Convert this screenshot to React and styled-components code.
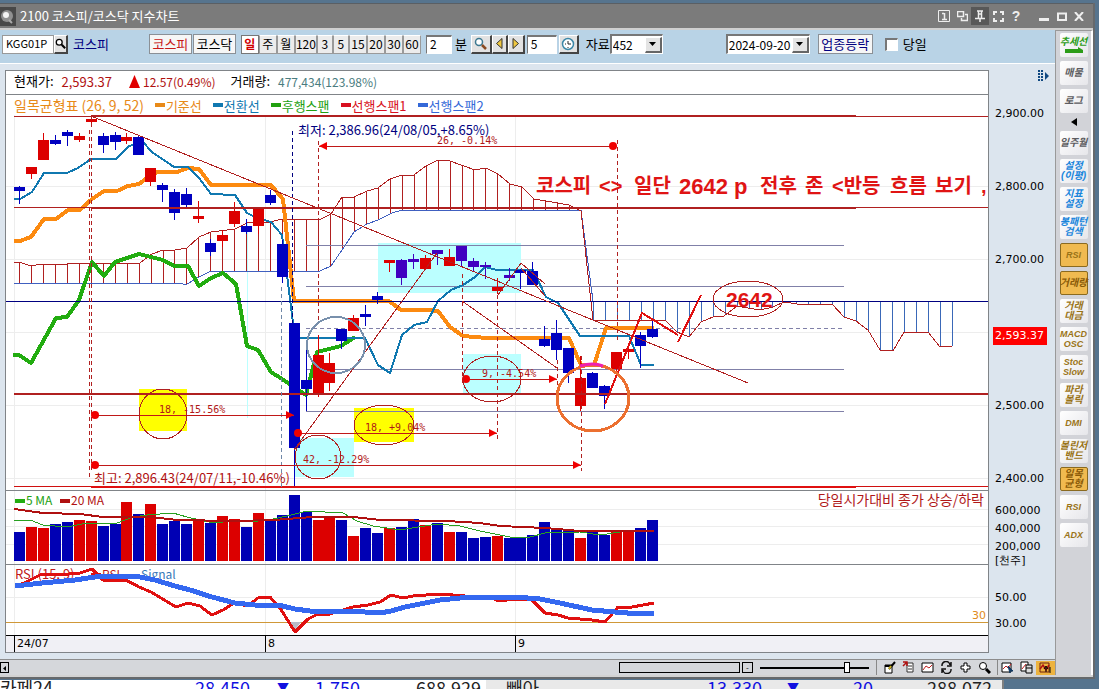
// App.jsx
import React from 'react';
import styled, { createGlobalStyle, css } from 'styled-components';

const GlobalStyle = createGlobalStyle`
  * {
    box-sizing: border-box;
  }

  body {
    margin: 0;
    background: #56748e;
    font-family: 'Noto Sans CJK KR', sans-serif;
    font-size: 12px;
    color: #000;
    overflow: hidden;
  }

  button,
  input,
  select {
    font-family: inherit;
    font-size: 12px;
    margin: 0;
    padding: 0;
    border-radius: 0;
  }
`;

/* ---------- window ---------- */

const Desktop = styled.div`
  height: 100vh;
  padding-top: 3px;
  overflow: hidden;
`;

const Window = styled.div`
  margin-right: 4px;
  border-right: 2px solid #66696c;
  border-bottom: 2px solid #66696c;
  background: #d2d2d2;
  padding-bottom: 2px;
`;

const TitleBar = styled.header`
  display: flex;
  align-items: center;
  height: 27px;
  padding-right: 6px;
  border-top: 1px solid #5a5f64;
  border-bottom: 2px solid #cfcfcf;
  background: #7b7b7b;
  color: #fff;
`;

const AppIcon = styled.svg`
  width: 16px;
  height: 19px;
  margin-right: 4px;
`;

const Title = styled.h1`
  flex: 1;
  margin: 0;
  font-size: 13px;
  font-weight: 400;
  line-height: 20px;
`;

const TitleButton = styled.button`
  display: flex;
  align-items: center;
  justify-content: center;
  width: ${(p) => p.$width || 18}px;
  height: 18px;
  border: 0;
  background: ${(p) => (p.$pressed ? '#585858' : 'transparent')};
  color: #eee;
  font-family: 'Liberation Sans', sans-serif;
  font-size: 14px;
  font-weight: 700;
`;

const TitleGap = styled.span`
  width: 10px;
`;

const WindowBody = styled.div`
  display: flex;
`;

const Main = styled.main`
  flex: 1;
  min-width: 0;
  background: #dce5ee;
`;

/* ---------- toolbar ---------- */

const Toolbar = styled.div`
  display: flex;
  align-items: center;
  height: 34px;
  padding: 0 0 5px 2px;
  border-bottom: 1px solid #fff;
  background: #b9d3e6;
  white-space: nowrap;
`;

const Group = styled.div`
  display: flex;
  align-items: center;
  gap: ${(p) => p.$gap || 0}px;
  margin-left: ${(p) => p.$left || 0}px;
`;

const TextBox = styled.input`
  width: ${(p) => p.$width}px;
  height: 19px;
  padding: 0 0 3px 3px;
  border: 1px solid #fff;
  border-top: 2px solid #777;
  border-left: 1px solid #777;
  background: #fff;
`;

const CodeBox = styled(TextBox)`
  font-size: 11px;
  border: 1px solid #999;
`;

const ToolButton = styled.button`
  display: flex;
  align-items: center;
  justify-content: center;
  width: ${(p) => p.$width}px;
  height: 19px;
  border: 1px solid #fff;
  border-right: 2px solid #444;
  border-bottom: 2px solid #444;
  background: #e2e2e2;
`;

const MarketButton = styled.button`
  width: ${(p) => p.$width || 43}px;
  height: 20px;
  border: 1px solid #8b9096;
  background: #f6f6f6;
  color: ${(p) => p.$color || '#000'};
  font-size: 13px;
  line-height: 16px;
`;

const PeriodButton = styled.button`
  width: ${(p) => p.$width}px;
  height: 19px;
  border: 1px solid #9a9a9a;
  border-top-color: #fff;
  background: #ececec;
  line-height: 16px;
  ${(p) =>
    p.$active &&
    css`
      border-color: #777;
      background: #fff;
      color: #d00000;
      font-weight: 700;
    `}
`;

const Label = styled.label`
  color: ${(p) => p.$color || '#000'};
  font-size: ${(p) => p.$size || 12}px;
  line-height: 18px;
`;

const Combo = styled.div`
  display: flex;
  align-items: center;
  width: ${(p) => p.$width}px;
  height: 20px;
  border: 1px solid #fff;
  border-top: 2px solid #777;
  border-left: 2px solid #777;
  background: #fff;
`;

const ComboSelect = styled.select`
  flex: 1;
  min-width: 0;
  height: 17px;
  padding: 0 0 3px 1px;
  border: 0;
  appearance: none;
  background: #fff;
`;

const ComboArrow = styled.span`
  display: flex;
  align-items: center;
  justify-content: center;
  width: 17px;
  height: 16px;
  border: 1px solid #fff;
  border-right: 2px solid #666;
  border-bottom: 2px solid #666;
  background: #e4e4e4;
  pointer-events: none;
`;

const CheckBox = styled.input`
  width: 13px;
  height: 13px;
  border: 1px solid #fff;
  border-top: 2px solid #777;
  border-left: 2px solid #777;
  appearance: none;
  background: #fff;
`;

/* ---------- chart ---------- */

const ChartArea = styled.div`
  display: flex;
  padding: 6px 0 6px 5px;
`;

const Frame = styled.section`
  flex: 1;
  min-width: 0;
  border: 1px solid #808488;
  background: #fff;
`;

const QuoteRow = styled.div`
  display: flex;
  align-items: center;
  height: 24px;
  padding: 0 0 3px 8px;
  border-bottom: 1px solid #808488;
  white-space: nowrap;
`;

const QuoteLabel = styled.span`
  font-size: 13px;
  line-height: 20px;
`;

const QuoteValue = styled.span`
  margin-left: 8px;
  margin-right: ${(p) => p.$after || 0}px;
  color: ${(p) => p.$color};
  font-size: ${(p) => p.$size || 12}px;
`;

const Triangle = styled.svg`
  width: 11px;
  height: 13px;
  margin-right: -5px;
`;

const Legend = styled.div`
  display: flex;
  align-items: center;
  gap: 11px;
  height: 20px;
  padding-left: 8px;
  color: #e88a18;
  white-space: nowrap;
`;

const LegendTitle = styled.span`
  font-size: 14px;
`;

const LegendItem = styled.span`
  display: flex;
  align-items: center;
  gap: 1px;
  color: ${(p) => p.$color};
  font-size: 13px;

  &::before {
    content: '';
    width: 10px;
    height: 4px;
    background: ${(p) => p.$color};
  }
`;

const Plot = styled.svg`
  display: block;
  width: 100%;
  height: ${(p) => p.$height}px;
  border-bottom: 1px solid ${(p) => p.$line || '#808488'};
  overflow: hidden;
`;

const TimeAxis = styled.div`
  display: flex;
  height: 16px;
  padding-left: 8px;
  background: #f0f0f5;
  font-family: 'DejaVu Sans', sans-serif;
  font-size: 11px;
  line-height: 16px;
`;

const Month = styled.span`
  width: ${(p) => p.$width}px;
  padding-left: 2px;
  border-left: 1px solid #000;
`;

const ValueAxis = styled.aside`
  position: relative;
  display: flex;
  flex-direction: column;
  width: 66px;
  padding-left: 6px;
  font-family: 'DejaVu Sans', sans-serif;
  font-size: 11px;
`;

const AxisGrip = styled.svg`
  align-self: flex-end;
  width: 12px;
  height: 12px;
  margin: 0 5px 25px 0;
`;

const Scale = styled.div`
  display: flex;
  flex-direction: column;
  gap: ${(p) => p.$gap}px;
  margin-bottom: ${(p) => p.$after}px;
  line-height: 14px;
`;

const LastPrice = styled.output`
  position: absolute;
  top: 257px;
  left: 4px;
  width: 54px;
  padding-left: 2px;
  background: #f00;
  color: #fff;
  line-height: 18px;
`;

/* ---------- bottom bar ---------- */

const BottomBar = styled.div`
  display: flex;
  align-items: center;
  height: 16px;
  border-top: 1px solid #8c8c8c;
  background: #d5d7db;
`;

const ScrollButton = styled.button`
  width: ${(p) => p.$width}px;
  height: 11px;
  border: 1px solid #000;
  background: #d5d7db;
  font-size: 8px;
  line-height: 8px;
`;

const ScrollTrack = styled.div`
  display: flex;
  flex: 1;
  justify-content: flex-end;
`;

const ScrollThumb = styled.div`
  width: 121px;
  height: 11px;
  margin-right: 2px;
  border: 1px solid #000;
`;

const ZoomRange = styled.input`
  width: 109px;
  height: 12px;
  margin: 0 7px;
  appearance: none;
  background: linear-gradient(#000, #000) center / 100% 2px no-repeat;

  &::-webkit-slider-thumb {
    width: 6px;
    height: 11px;
    border: 1px solid #000;
    appearance: none;
    background: #fff;
  }
`;

const BarIcons = styled.div`
  display: flex;
  align-items: center;
  height: 15px;
  padding: 0 ${(p) => p.$pad}px;
  border-left: 1px solid #888;
`;

const BarButton = styled.button`
  display: flex;
  align-items: center;
  justify-content: center;
  width: 19px;
  height: 14px;
  border: 0;
  background: ${(p) => (p.$active ? '#edb33f' : 'transparent')};
`;

/* ---------- side bar ---------- */

const SideBar = styled.nav`
  display: flex;
  flex-direction: column;
  align-items: center;
  gap: 4px;
  width: 38px;
  padding-top: 2px;
  border-top: 1px solid #999;
  border-left: 1px solid #999;
  border-right: 2px solid #fff;
  background: #d2d3d8;
`;

const SideButton = styled.button`
  width: 28px;
  height: 24px;
  border: ${(p) => (p.$active ? '1px solid #8a6a20' : '0')};
  border-radius: 2px;
  background: ${(p) => (p.$active ? '#f0ba50' : 'linear-gradient(135deg, #fff, #e6e6ea)')};
  color: ${(p) => p.$color};
  font-family: 'Liberation Sans', 'Noto Sans CJK KR', sans-serif;
  font-size: ${(p) => (p.$latin ? 9 : 10)}px;
  font-style: italic;
  font-weight: 700;
  line-height: 10px;
  white-space: pre;
  display: flex;
  flex-direction: column;
  align-items: center;
  justify-content: center;
`;

const SideArrow = styled.svg`
  width: 10px;
  height: 10px;
`;

/* ---------- quote strip behind the window ---------- */

const Strip = styled.div`
  display: grid;
  grid-template-columns: 195px 82px 38px 101px 90px 201px 80px 66px 74px auto;
  width: 1004px;
  max-width: 100%;
  height: 12px;
  margin-top: 1px;
  border-right: 2px solid #808080;
  background: linear-gradient(90deg, #fff 486px, #e9e9e9 486px);
  font-size: 18px;
  line-height: 20px;
  overflow: hidden;
`;

const StripCell = styled.span`
  margin-top: -3px;
  color: ${(p) => p.$color || '#222'};
  font-size: ${(p) => (p.$mark ? 12 : 18)}px;
  white-space: nowrap;
`;

/* ---------- data (canvas coordinates) ---------- */

const RED = '#dc0000';
const BLUE = '#0000c0';
const VIOLET = '#4000c0';
const LINE = '#b02020';

const barX = (i) => Math.round(19 + i * 11.94);

// colour, body top, body bottom, high, low
const candles = [
  ['b', 187, 191, 186, 204], ['r', 167, 174, 167, 179], ['r', 140, 160, 133, 160], ['b', 140, 144, 135, 145],
  ['b', 132, 136, 130, 146], ['r', 136, 140, 133, 142], ['r', 119, 122, 115, 127], ['b', 136, 145, 133, 153],
  ['b', 135, 142, 132, 150], ['r', 137, 141, 133, 144], ['b', 137, 155, 135, 155], ['r', 168, 182, 168, 186],
  ['b', 185, 190, 183, 202], ['b', 192, 213, 189, 220], ['b', 194, 205, 188, 209], ['r', 216, 219, 201, 223],
  ['b', 243, 252, 239, 256], ['r', 235, 241, 230, 247], ['r', 211, 224, 202, 227], ['b', 226, 232, 219, 234],
  ['r', 208, 226, 208, 234], ['b', 195, 203, 190, 205], ['b', 244, 277, 240, 283], ['b', 323, 448, 323, 487],
  ['b', 380, 389, 347, 411], ['r', 355, 395, 335, 397], ['r', 363, 383, 353, 391], ['b', 329, 341, 329, 349],
  ['r', 318, 331, 315, 331], ['b', 314, 317, 305, 326], ['b', 296, 300, 292, 304], ['r', 260, 263, 260, 272],
  ['v', 260, 278, 259, 285], ['v', 259, 262, 254, 269], ['r', 258, 269, 255, 269], ['v', 250, 254, 250, 265],
  ['r', 257, 266, 249, 266], ['v', 246, 261, 246, 266], ['v', 261, 267, 258, 271], ['v', 265, 267, 262, 279],
  ['r', 287, 291, 278, 294], ['v', 275, 278, 268, 281], ['b', 270, 273, 269, 289], ['b', 271, 285, 262, 285],
  ['b', 339, 346, 326, 347], ['b', 333, 350, 320, 360], ['b', 348, 373, 348, 383], ['r', 378, 406, 356, 411],
  ['b', 373, 388, 372, 388], ['b', 386, 396, 385, 409], ['r', 352, 369, 352, 373], ['r', 349, 352, 346, 359],
  ['b', 335, 346, 332, 368], ['b', 329, 337, 318, 338],
];

const fills = { r: RED, b: BLUE, v: VIOLET };

const volumeTops = [
  532, 527, 528, 524, 522, 520, 521, 526, 524, 502, 514, 504, 524, 521, 524, 520, 523, 516, 519, 527, 513, 520, 515,
  495, 512, 520, 517, 520, 536, 528, 533, 528, 527, 519, 525, 523, 532, 532, 538, 537, 536, 538, 538, 535, 522, 529,
  529, 538, 531, 535, 532, 532, 528, 520,
];
const volumeColors = 'brrbbrrbbrbrbbbrbrrbrbbbbrrbrbbrbbrbrbbbrbbbbbbrbbrrbb';

const spanA = [
  [14, 262], [19, 262], [31, 266], [42, 264], [56, 265], [67, 264], [140, 263], [152, 254], [163, 250], [175, 250],
  [187, 248], [199, 237], [211, 232], [235, 229], [247, 223], [270, 222], [282, 219], [307, 219], [319, 220],
  [331, 214], [342, 197], [354, 197], [367, 191], [378, 188], [390, 179], [402, 175], [414, 175], [426, 166],
  [438, 160], [450, 161], [475, 170], [486, 168], [498, 174], [510, 184], [522, 187], [534, 199], [546, 201],
  [569, 205], [581, 211], [593, 320], [665, 320], [677, 332], [689, 337], [701, 322], [713, 317], [724, 316],
  [737, 306], [748, 308], [760, 310], [773, 307], [784, 302], [797, 304], [832, 304], [844, 317], [856, 321],
  [868, 330], [880, 350], [893, 351], [904, 332], [928, 332], [940, 347], [952, 346],
];

const spanB = [
  [14, 283], [183, 284], [187, 284], [199, 277], [211, 271], [320, 271], [331, 266], [342, 250], [354, 232],
  [367, 224], [378, 220], [392, 213], [402, 210], [581, 210], [593, 301], [952, 301],
];

const baseLine = [
  [14, 241], [20, 241], [31, 237], [44, 219], [56, 219], [68, 210], [80, 210], [92, 199], [104, 191], [117, 191],
  [128, 186], [139, 184], [147, 178], [157, 172], [177, 172], [188, 168], [199, 169], [211, 185], [271, 185],
  [283, 199], [294, 301], [389, 301], [401, 310], [427, 310], [438, 311], [450, 327], [463, 336], [487, 338],
  [569, 338], [581, 365], [594, 365], [606, 328], [654, 328],
];

const turnLine = [
  [14, 199], [20, 199], [32, 192], [44, 173], [67, 173], [78, 168], [91, 159], [116, 159], [129, 146], [143, 142],
  [152, 152], [174, 167], [188, 167], [199, 178], [211, 194], [235, 195], [247, 213], [257, 218], [271, 222],
  [282, 235], [293, 323], [299, 338], [365, 338], [378, 365], [390, 373], [402, 335], [414, 325], [427, 322],
  [438, 301], [451, 290], [463, 285], [475, 277], [485, 267], [497, 270], [533, 270], [546, 297], [558, 303],
  [580, 336], [629, 336], [641, 365], [654, 365],
];

const lagLine = [
  [13, 355], [19, 355], [31, 363], [56, 318], [67, 317], [79, 300], [92, 262], [104, 276], [115, 262], [127, 258],
  [139, 254], [163, 260], [174, 266], [188, 266], [199, 286], [211, 278], [223, 273], [236, 284], [247, 346],
  [258, 350], [271, 372], [282, 379], [294, 387], [306, 395], [317, 352], [341, 346], [355, 337],
];

const volumeMa20 = [
  [14, 509], [43, 513], [80, 514], [103, 517], [150, 517], [177, 520], [233, 521], [273, 520], [313, 517],
  [353, 517], [380, 520], [447, 521], [480, 523], [500, 526], [545, 528], [580, 531], [654, 531],
];

const volumeMa5 = [
  [14, 520], [30, 520], [43, 525], [67, 527], [87, 523], [117, 523], [133, 517], [147, 515], [173, 513],
  [187, 517], [213, 523], [233, 521], [250, 522], [273, 519], [287, 516], [307, 511], [343, 513], [357, 521],
  [373, 526], [400, 530], [437, 524], [460, 526], [480, 531], [510, 537], [530, 537], [545, 533], [580, 532],
  [600, 535], [620, 532], [654, 530],
];

const rsi = [
  [15, 586], [24, 583], [42, 574], [59, 575], [80, 573], [92, 569], [103, 580], [126, 580], [139, 587], [151, 592],
  [176, 607], [188, 603], [200, 606], [212, 615], [223, 610], [234, 603], [248, 606], [258, 598], [270, 597],
  [280, 608], [295, 632], [308, 619], [318, 614], [330, 614], [353, 607], [368, 605], [380, 602], [391, 595],
  [403, 598], [413, 596], [440, 594], [465, 596], [490, 597], [498, 601], [515, 599], [530, 599], [534, 602],
  [545, 613], [558, 615], [568, 618], [592, 620], [605, 622], [618, 607], [632, 607], [654, 603],
];

const signal = [
  [15, 585], [24, 585], [42, 583], [75, 580], [95, 577], [125, 576], [140, 577], [155, 580], [175, 586],
  [190, 590], [212, 597], [235, 603], [255, 605], [278, 605], [295, 609], [310, 611], [350, 611], [380, 613],
  [391, 611], [405, 607], [440, 600], [470, 597], [515, 597], [540, 599], [560, 603], [592, 610], [615, 612],
  [640, 614], [654, 613],
];

const valueAt = (points, x) => {
  for (let i = 1; i < points.length; i += 1) {
    const [x0, y0] = points[i - 1];
    const [x1, y1] = points[i];
    if (x <= x1) return y0 + ((y1 - y0) * (x - x0)) / (x1 - x0);
  }
  return points[points.length - 1][1];
};

/* ---------- chart pieces ---------- */

const Series = ({ points, color, width = 1 }) => (
  <polyline
    points={points.map((p) => p.join(',')).join(' ')}
    fill="none"
    stroke={color}
    strokeWidth={width}
    strokeLinejoin="round"
    shapeRendering="crispEdges"
  />
);

const HLine = ({ y, from = 14, to = 4000, color = LINE, width = 1 }) => (
  <rect x={from} y={y} width={to - from} height={width} fill={color} shapeRendering="crispEdges" />
);

const VDash = ({ x, from, to, color = LINE }) => (
  <line x1={x + 0.5} x2={x + 0.5} y1={from} y2={to} stroke={color} strokeDasharray="4 3" shapeRendering="crispEdges" />
);

const Ring = ({ cx, cy, rx, ry, color = LINE, width = 1 }) => (
  <ellipse cx={cx} cy={cy} rx={rx} ry={ry} fill="none" stroke={color} strokeWidth={width} shapeRendering="crispEdges" />
);

const Span = ({ y, from, to, both }) => (
  <g fill="#f00000">
    <HLine y={y} from={from} to={to} color="#c01818" />
    {both ? (
      <>
        <path d={`M${from} ${y}l8 -4v8z`} />
        <circle cx={to - 4} cy={y} r="4" />
      </>
    ) : (
      <>
        <circle cx={from} cy={y} r="4" />
        <path d={`M${to} ${y}l-8 -4v8z`} />
      </>
    )}
  </g>
);

const spanText = { fill: '#b01818', fontFamily: "'DejaVu Sans Mono', monospace", fontSize: 10 };

const PricePanel = () => (
  <Plot $height={376}>
    <g transform="translate(-6 -115)">
      {[186, 259, 332, 405, 478].map((y) => (
        <HLine key={y} y={y} from={5} color="#ededed" />
      ))}
      {[14, 265, 515].map((x) => (
        <rect key={x} x={x} y="100" width="1" height="400" fill="#ededed" />
      ))}
      <rect x="139" y="389" width="48" height="42" fill="#ff0" />
      <rect x="354" y="408" width="60" height="34" fill="#ff0" />
      <rect x="378" y="243" width="143" height="50" fill="#bff" />
      <rect x="463" y="354" width="58" height="39" fill="#bff" />
      <rect x="294" y="438" width="60" height="39" fill="#bff" />
      <rect x="247" y="222" width="1" height="196" fill="#bff" />

      {Array.from({ length: 79 }, (_, i) => {
        const x = Math.round(19 + i * 11.96);
        const a = valueAt(spanA, x);
        const b = valueAt(spanB, x);
        return (
          <rect
            key={x}
            x={x}
            y={Math.min(a, b)}
            width="1"
            height={Math.abs(a - b)}
            fill={x < 590 ? LINE : '#3a68b8'}
            shapeRendering="crispEdges"
          />
        );
      })}
      <Series points={spanB} color="#4060c0" />
      <Series points={spanA} color={LINE} />

      {[245, 286, 369, 411].map((y) => (
        <HLine key={y} y={y} from={306} to={844} color="#8080a8" />
      ))}
      <line x1="306" x2="844" y1="328.5" y2="328.5" stroke="#8080a8" strokeDasharray="4 3" />

      <Series points={lagLine} color="#22ac10" width={4} />
      <Series points={baseLine} color="#fc8a10" width={4} />
      <Series points={turnLine} color="#1078b0" width={2} />

      {candles.map(([tone, top, bottom, high, low], i) => (
        <g key={barX(i)} fill={fills[tone]} shapeRendering="crispEdges">
          <rect x={barX(i)} y={high} width="1" height={low - high} />
          <rect x={barX(i) - 5} y={top} width="11" height={bottom - top} />
        </g>
      ))}

      <HLine y={301} from={5} color="#000080" />
      <HLine y={116} to={91} />
      <HLine y={115} from={91} to={856} width={2} />
      <HLine y={116} from={856} />
      <HLine y={207} to={91} />
      <HLine y={207} from={91} to={856} width={2} />
      <HLine y={207} from={856} />
      <HLine y={393} width={2} />
      <HLine y={486} to={91} color="#d01010" />
      <HLine y={486} from={91} to={856} width={2} color="#e01010" />
      <HLine y={486} from={856} color="#d01010" />

      <VDash x={89} from={130} to={480} />
      <VDash x={91} from={116} to={472} />
      <VDash x={281} from={287} to={487} color="#7088a8" />
      <VDash x={292} from={131} to={323} color="#000080" />
      <VDash x={318} from={141} to={323} />
      <VDash x={462} from={274} to={384} />
      <VDash x={497} from={288} to={439} />
      <VDash x={557} from={360} to={386} />
      <VDash x={581} from={356} to={471} />
      <VDash x={617} from={140} to={342} />

      <Series points={[[91, 116], [748, 383]]} color={LINE} />
      <Series points={[[294, 450], [437, 253]]} color={LINE} />
      <Series points={[[498, 295], [521, 263], [545, 284]]} color={LINE} />
      <Series points={[[521, 268], [545, 296]]} color={LINE} />
      <Series points={[[462, 301], [557, 368]]} color={LINE} />
      <Series points={[[605, 404], [642, 313], [678, 335]]} color="#e01010" width={2} />
      <Series points={[[678, 342], [701, 295]]} color="#e01010" width={2} />

      <Span y={146} from={319} to={617} both />
      <Span y={379} from={466} to={557} />
      <Span y={415} from={95} to={294} />
      <Span y={433} from={298} to={497} />
      <Span y={465} from={95} to={581} />

      <Ring cx={163} cy={414} rx={24} ry={25} />
      <Ring cx={384} cy={425} rx={30} ry={20} />
      <Ring cx={318} cy={457} rx={23} ry={22} />
      <Ring cx={492} cy={379} rx={29} ry={23} />
      <Ring cx={748} cy={299} rx={35} ry={18} />
      <Ring cx={336} cy={345} rx={29} ry={28} color="#7890ac" width={2} />
      <Ring cx={593} cy={398} rx={36} ry={33} color="#ec7030" width={3} />
      <path d="M580 366Q593 362 603 366" fill="none" stroke="#f020b0" strokeWidth="3" />

      <text {...spanText} x="437" y="144">26, -0.14%</text>
      <text {...spanText} x="159" y="413">18, -15.56%</text>
      <text {...spanText} x="365" y="431">18, +9.04%</text>
      <text {...spanText} x="303" y="463">42, -12.29%</text>
      <text {...spanText} x="482" y="377">9, -4.54%</text>

      <text x="298" y="135" fontSize="13" fill="#000080">최저: 2,386.96(24/08/05,+8.65%)</text>
      <text x="94" y="483" fontSize="13" fill="#b01010">최고: 2,896.43(24/07/11,-10.46%)</text>

      <g fill="#e01414" fontWeight="700" fontFamily="'Liberation Sans', 'Noto Sans CJK KR', sans-serif">
        <text y="193" fontSize="20">
          <tspan x="536">코스피</tspan>
          <tspan x="599">&lt;&gt;</tspan>
          <tspan x="634">일단</tspan>
        </text>
        <text x="679" y="194" fontSize="22">2642 p</text>
        <text y="193" fontSize="20">
          <tspan x="760">전후</tspan>
          <tspan x="805">존</tspan>
          <tspan x="832">&lt;반등</tspan>
          <tspan x="890">흐름</tspan>
          <tspan x="935">보기</tspan>
          <tspan x="981">,</tspan>
        </text>
        <text x="726" y="307" fontSize="21">2642</text>
      </g>
    </g>
  </Plot>
);

const VolumePanel = () => (
  <Plot $height={74}>
    <g transform="translate(-6 -491)">
      {[509, 526, 544].map((y) => (
        <HLine key={y} y={y} from={5} color="#ededed" />
      ))}
      {[14, 265, 515].map((x) => (
        <rect key={x} x={x} y="491" width="1" height="73" fill="#ededed" />
      ))}
      {volumeTops.map((top, i) => (
        <rect
          key={barX(i)}
          x={barX(i) - 5}
          y={top}
          width="11"
          height={561 - top}
          fill={volumeColors[i] === 'r' ? RED : '#0000b4'}
          shapeRendering="crispEdges"
        />
      ))}
      <Series points={volumeMa5} color="#28a020" />
      <Series points={volumeMa20} color="#b01010" width={2} />
      <rect x="15" y="499" width="10" height="4" fill="#22ac10" />
      <text x="26" y="505" fontSize="12" fill="#22a010">5 MA</text>
      <rect x="60" y="499" width="10" height="4" fill="#b01010" />
      <text x="71" y="505" fontSize="12" fill="#b01010">20 MA</text>
    </g>
    <text x="100%" y="14" dx="-4" textAnchor="end" fontSize="14" fill="#b01818">당일시가대비 종가 상승/하락</text>
  </Plot>
);

const RsiPanel = () => (
  <Plot $height={71} $line="#000">
    <g transform="translate(-6 -565)">
      <HLine y={597} from={5} color="#ededed" />
      {[14, 265, 515].map((x) => (
        <rect key={x} x={x} y="565" width="1" height="70" fill="#ededed" />
      ))}
      <text x="15" y="579" fontSize="13" fill="#c01818">RSI (15, 9)</text>
      <rect x="91" y="573" width="10" height="4" fill="#e01010" />
      <text x="102" y="579" fontSize="12" fill="#c01818">RSI</text>
      <text x="141" y="579" fontSize="12" fill="#3878b8">Signal</text>
      <HLine y={622} from={5} color="#d09838" />
      <path d="M288 622h13l-6 8z" fill="#b8bcc8" />
      <Series points={rsi} color="#e01010" width={3} />
      <Series points={signal} color="#3468f0" width={5} />
    </g>
    <text x="100%" y="54" dx="-2" textAnchor="end" fontSize="11" fill="#e08a20" fontFamily="'DejaVu Sans', sans-serif">
      30
    </text>
  </Plot>
);

const Caret = () => (
  <svg width="7" height="4">
    <path d="M0 0h7L3.500 4z" fill="#000" />
  </svg>
);

const Magnifier = ({ color = '#000', size = 13 }) => (
  <svg width={size} height={size} viewBox="0 0 13 13" fill="none" stroke={color}>
    <circle cx="5" cy="5" r="3.500" fill="#fff" strokeWidth="1.500" />
    <path d="M8 8l4 4" stroke={color === '#000' ? color : '#8a4a20'} strokeWidth="2.500" />
  </svg>
);

const barDrawings = {
  edit: (
    <>
      <path d="M2 4h7v8H2z" fill="#fff" stroke="#000" />
      <path d="M2 5h7" stroke="#000" strokeWidth="2" />
      <path d="M6 8l6-7" stroke="#000" strokeWidth="2" />
      <path d="M6 8l2-3" stroke="#c8b020" strokeWidth="2" />
    </>
  ),
  report: (
    <>
      <path d="M5 2h6v9H5z" fill="#fff" stroke="#333" />
      <path d="M6 5h4M6 8h4" stroke="#333" />
      <path d="M1 1h4v4M1 5l4-4" stroke="#b01010" strokeWidth="1.500" />
    </>
  ),
  chart: (
    <>
      <path d="M1 2h11v9H1z" fill="#fff" stroke="#000" />
      <path d="M2 9l3-4 3 2 3-3" stroke="#c02020" />
    </>
  ),
  refresh: (
    <path d="M2 5a4 4 0 0 1 8-1M11 1v4H7M11 8a4 4 0 0 1-8 1M2 12V8h4" stroke="#111" strokeWidth="1.500" />
  ),
  plus: <path d="M5 2h3v3h3v3H8v3H5V8H2V5h3z" fill="#fff" stroke="#000" />,
  search: (
    <>
      <circle cx="5" cy="5" r="3.500" fill="#fff" stroke="#000" />
      <path d="M8 8l4 4" stroke="#000" strokeWidth="3" />
    </>
  ),
  pointer: (
    <>
      <path d="M1 2h9v9H1z" fill="#fff" stroke="#000" />
      <path d="M2 8l3-3 2 2 3-4" stroke="#c02020" />
      <path d="M7 5l5 5H9v2z" fill="#103860" stroke="#103860" />
    </>
  ),
  copy: (
    <>
      <path d="M1 1h7v9H1z" fill="#fff" stroke="#000" />
      <path d="M2 8l4-5" stroke="#c02020" />
      <path d="M6 4h6v8H6zM6 7h6" fill="#ddd" stroke="#000" />
    </>
  ),
  pattern: (
    <>
      <path d="M1 2h9v9H1z" stroke="#702010" />
      <path d="M1 8l3-4 3 5 3-5" stroke="#b01010" strokeWidth="1.500" />
      <path d="M7 11V6M5 8l2-3 2 3M11 6v6" stroke="#000" />
    </>
  ),
};

const BarIcon = ({ name, active }) => (
  <BarButton type="button" aria-label={name} $active={active}>
    <svg width="13" height="13" viewBox="0 0 13 13" fill="none">
      {barDrawings[name]}
    </svg>
  </BarButton>
);

const GRAY = '#5c5c60';
const SKY = '#1a86dc';
const GOLD = '#9a7418';

const sideItems = [
  { lines: ['매물'], color: GRAY },
  { lines: ['로그'], color: GRAY },
  { arrow: true },
  { lines: ['일주월'], color: GRAY },
  { lines: ['설정', '(이평)'], color: SKY },
  { lines: ['지표', '설정'], color: SKY },
  { lines: ['봉패턴', '검색'], color: SKY },
  { lines: ['RSI'], color: GOLD, latin: true, active: true },
  { lines: ['거래량'], color: '#8a5a08', active: true },
  { lines: ['거래', '대금'], color: GOLD },
  { lines: ['MACD', 'OSC'], color: GOLD, latin: true },
  { lines: ['Stoc', 'Slow'], color: GOLD, latin: true },
  { lines: ['파라', '볼릭'], color: GOLD },
  { lines: ['DMI'], color: GOLD, latin: true },
  { lines: ['볼린저', '밴드'], color: GOLD },
  { lines: ['일목', '균형'], color: '#8a5a08', active: true },
  { lines: ['RSI'], color: GOLD, latin: true },
  { lines: ['ADX'], color: GOLD, latin: true },
];

const periods = [
  ['일', 18], ['주', 18], ['월', 18], ['120', 22], ['3', 16], ['5', 16], ['15', 18], ['20', 18], ['30', 18], ['60', 18],
];

const WindowTitle = () => (
  <TitleBar>
    <AppIcon viewBox="0 0 16 19">
      <rect width="16" height="19" fill="#484848" />
      <circle cx="7" cy="9" r="6" fill="#909090" />
      <circle cx="6" cy="8" r="3" fill="#f4f4f4" />
      <path d="M9 13l3 3" stroke="#aaa" strokeWidth="2" />
    </AppIcon>
    <Title>2100 코스피/코스닥 지수차트</Title>
    <TitleButton type="button" aria-label="화면 번호">
      <svg width="12" height="12" fill="none" stroke="#eee">
        <path d="M.5.5h11v11H.5z" />
        <path d="M4 3.500h2M6.500 3v6M4 9.500h5" strokeWidth="1.500" />
      </svg>
    </TitleButton>
    <TitleButton type="button" aria-label="복사">
      <svg width="11" height="11" fill="none" stroke="#eee">
        <path d="M.5.5h6v5h-6zM8 3.500h2.500v6h-6V7" strokeWidth="1.500" />
      </svg>
    </TitleButton>
    <TitleButton type="button" aria-label="고정" $pressed>
      <svg width="10" height="12" fill="none" stroke="#eee">
        <path d="M2 1h6M3.500 1v7M6.500 1v7M3 4h4M0 8.500h10M5 9v3" strokeWidth="1.500" />
      </svg>
    </TitleButton>
    <TitleButton type="button" aria-label="확장">
      <svg width="11" height="11" fill="none" stroke="#eee" strokeWidth="2">
        <path d="M1 4V1h3M7 1h3v3M10 7v3H7M4 10H1V7" />
      </svg>
    </TitleButton>
    <TitleButton type="button">?</TitleButton>
    <TitleGap />
    <TitleButton type="button" aria-label="최소화">
      <svg width="10" height="10">
        <rect y="7" width="10" height="3" fill="#eee" />
      </svg>
    </TitleButton>
    <TitleButton type="button" aria-label="최대화">
      <svg width="10" height="9" fill="none" stroke="#eee">
        <path d="M1 1.500h8V8H1z" strokeWidth="2" />
      </svg>
    </TitleButton>
    <TitleButton type="button" aria-label="닫기" $width={16}>
      <svg width="10" height="9" stroke="#eee" strokeWidth="2">
        <path d="M1 0l8 9M9 0L1 9" />
      </svg>
    </TitleButton>
  </TitleBar>
);

const ChartToolbar = () => (
  <Toolbar>
    <Group>
      <CodeBox $width={52} defaultValue="KGG01P" aria-label="종목코드" />
      <ToolButton type="button" $width={14} aria-label="검색">
        <Magnifier size={11} />
      </ToolButton>
    </Group>
    <Group $left={5}>
      <Label as="span" $color="#000080" $size={13}>코스피</Label>
    </Group>
    <Group $left={40} $gap={1}>
      <MarketButton type="button" $color="#c81818">코스피</MarketButton>
      <MarketButton type="button">코스닥</MarketButton>
    </Group>
    <Group $left={5}>
      {periods.map(([name, width], i) => (
        <PeriodButton key={name} type="button" $width={width} $active={i === 0}>
          {name}
        </PeriodButton>
      ))}
    </Group>
    <Group $left={5} $gap={3}>
      <TextBox id="minutes" $width={26} defaultValue="2" />
      <Label htmlFor="minutes" $size={13}>분</Label>
    </Group>
    <Group $left={4}>
      <ToolButton type="button" $width={21} aria-label="확대">
        <Magnifier color="#3c7890" />
      </ToolButton>
      <ToolButton type="button" $width={16} aria-label="이전">
        <svg width="8" height="11">
          <path d="M7 .5v10L1.500 5.500z" fill="#f0c840" stroke="#333" />
        </svg>
      </ToolButton>
      <ToolButton type="button" $width={17} aria-label="다음">
        <svg width="8" height="11">
          <path d="M1 .5v10l5.500-5z" fill="#f0c840" stroke="#333" />
        </svg>
      </ToolButton>
    </Group>
    <Group $left={2} $gap={2}>
      <TextBox $width={30} defaultValue="5" aria-label="간격" />
      <ToolButton type="button" $width={20} aria-label="시간">
        <svg width="14" height="14" fill="none">
          <circle cx="7" cy="7" r="5.500" fill="#fff" stroke="#3c88a8" strokeWidth="1.500" />
          <path d="M7 4v3h3M4 7h1M7 10v1" stroke="#222" />
        </svg>
      </ToolButton>
    </Group>
    <Group $left={7}>
      <Label htmlFor="count" $size={13}>자료</Label>
      <Combo $width={53}>
        <ComboSelect id="count" defaultValue="452">
          <option>452</option>
        </ComboSelect>
        <ComboArrow>
          <Caret />
        </ComboArrow>
      </Combo>
    </Group>
    <Group $left={63} $gap={8}>
      <Combo $width={84}>
        <ComboSelect defaultValue="2024-09-20" aria-label="기준일">
          <option>2024-09-20</option>
        </ComboSelect>
        <ComboArrow>
          <Caret />
        </ComboArrow>
      </Combo>
      <MarketButton type="button" $width={55} $color="#000080">업종등락</MarketButton>
    </Group>
    <Group $left={12} $gap={5}>
      <CheckBox id="today" type="checkbox" />
      <Label htmlFor="today" $size={13}>당일</Label>
    </Group>
  </Toolbar>
);

const App = () => {
  return (
    <Desktop>
      <GlobalStyle />
      <Window>
        <WindowTitle />
        <WindowBody>
          <Main>
            <ChartToolbar />
            <ChartArea>
              <Frame>
                <QuoteRow>
                  <QuoteLabel>현재가:</QuoteLabel>
                  <QuoteValue $color="#b01010" $size={13} $after={17}>2,593.37</QuoteValue>
                  <Triangle viewBox="0 0 11 13">
                    <path d="M5.500 0L11 13H0z" fill="#e00000" />
                  </Triangle>
                  <QuoteValue $color="#b01010" $after={15}>12.57(0.49%)</QuoteValue>
                  <QuoteLabel>거래량:</QuoteLabel>
                  <QuoteValue $color="#4a7c80">477,434(123.98%)</QuoteValue>
                </QuoteRow>
                <Legend>
                  <LegendTitle>일목균형표 (26, 9, 52)</LegendTitle>
                  <LegendItem $color="#e88a18">기준선</LegendItem>
                  <LegendItem $color="#1078b0">전환선</LegendItem>
                  <LegendItem $color="#22a010">후행스팬</LegendItem>
                  <LegendItem $color="#d81020">선행스팬1</LegendItem>
                  <LegendItem $color="#3468d8">선행스팬2</LegendItem>
                </Legend>
                <PricePanel />
                <VolumePanel />
                <RsiPanel />
                <TimeAxis>
                  <Month $width={251}>24/07</Month>
                  <Month $width={250}>8</Month>
                  <Month $width={250}>9</Month>
                </TimeAxis>
              </Frame>
              <ValueAxis>
                <AxisGrip viewBox="0 0 12 12" fill="#104880">
                  {[0, 3, 6, 9].map((y) => (
                    <path key={y} d={`M0 ${y}h2v2h-2zM3 ${y}h2v2h-2z`} />
                  ))}
                  <path d="M7 2l4 4-4 4z" />
                </AxisGrip>
                <Scale $gap={59} $after={18}>
                  {['2,900.00', '2,800.00', '2,700.00', '2,600.00', '2,500.00', '2,400.00'].map((v) => (
                    <span key={v}>{v}</span>
                  ))}
                </Scale>
                <Scale $gap={4} $after={0}>
                  <span>600,000</span>
                  <span>400,000</span>
                  <span>200,000</span>
                </Scale>
                <Scale $gap={0} $after={23}>
                  <span>[천주]</span>
                </Scale>
                <Scale $gap={12} $after={0}>
                  <span>50.00</span>
                  <span>30.00</span>
                </Scale>
                <LastPrice>2,593.37</LastPrice>
              </ValueAxis>
            </ChartArea>
            <BottomBar>
              <ScrollButton type="button" $width={9} aria-label="왼쪽">
                <svg width="4" height="5">
                  <path d="M3 0v5L0 2.500z" fill="#000" />
                </svg>
              </ScrollButton>
              <ScrollTrack>
                <ScrollThumb />
              </ScrollTrack>
              <ScrollButton type="button" $width={11}>-</ScrollButton>
              <ZoomRange type="range" min="0" max="100" defaultValue="82" aria-label="확대 비율" />
              <BarIcons $pad={3}>
                {['edit', 'report', 'chart', 'refresh', 'plus', 'search'].map((name) => (
                  <BarIcon key={name} name={name} />
                ))}
              </BarIcons>
              <BarIcons $pad={0}>
                <BarIcon name="pointer" />
                <BarIcon name="copy" />
                <BarIcon name="pattern" active />
              </BarIcons>
            </BottomBar>
          </Main>
          <SideBar>
            <SideButton type="button" $color="#2c9c18">
              <span>추세선</span>
              <svg width="18" height="6">
                <path d="M0 2h13V0l5 3v3H0z" fill="#2c9c18" />
              </svg>
            </SideButton>
            {sideItems.map((item, i) =>
              item.arrow ? (
                <SideArrow key={i} viewBox="0 0 10 10">
                  <path d="M8 1v8L2 5z" fill="#000" />
                </SideArrow>
              ) : (
                <SideButton key={i} type="button" $color={item.color} $latin={item.latin} $active={item.active}>
                  {item.lines.map((line) => (
                    <span key={line}>{line}</span>
                  ))}
                </SideButton>
              )
            )}
          </SideBar>
        </WindowBody>
      </Window>
      <Strip>
        <StripCell>카페24</StripCell>
        <StripCell $color="#1010e0">28,450</StripCell>
        <StripCell $color="#1010e0" $mark>▼</StripCell>
        <StripCell $color="#1010e0">1,750</StripCell>
        <StripCell>688,929</StripCell>
        <StripCell>빼아</StripCell>
        <StripCell $color="#1010e0">13,330</StripCell>
        <StripCell $color="#1010e0" $mark>▼</StripCell>
        <StripCell $color="#1010e0">20</StripCell>
        <StripCell>288,072</StripCell>
      </Strip>
    </Desktop>
  );
};

export default App;
